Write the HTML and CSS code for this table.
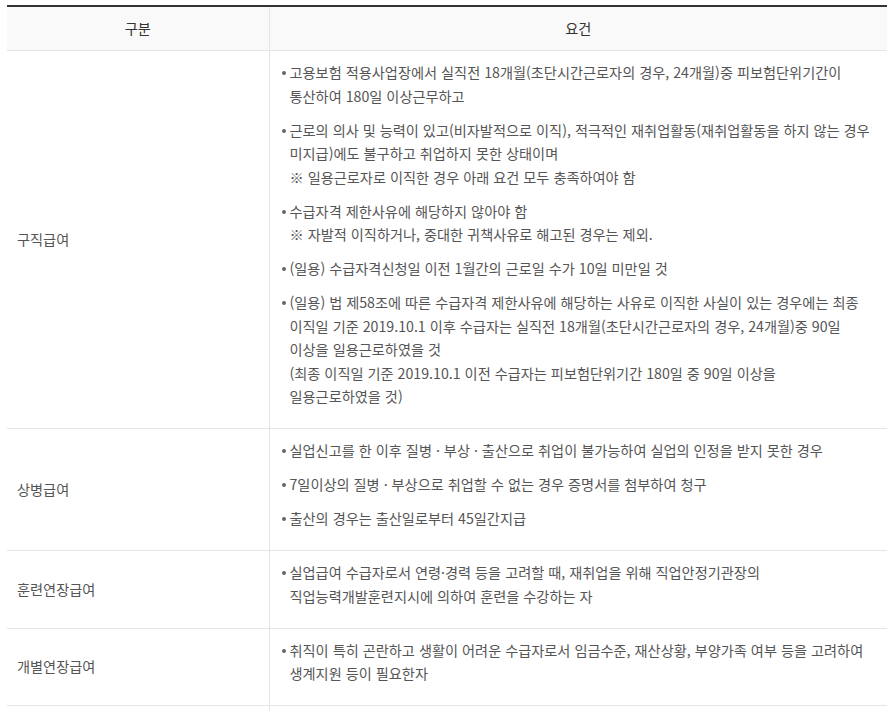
FILE: index.html
```html
<!DOCTYPE html>
<html lang="ko">
<head>
<meta charset="utf-8">
<title>구직급여 요건</title>
<link rel="stylesheet" href="styles.css">
</head>
<body>
<div class="wrap">
<table class="req-table">
  <colgroup>
    <col class="col-kind">
    <col class="col-req">
  </colgroup>
  <thead>
    <tr>
      <th>구분</th>
      <th>요건</th>
    </tr>
  </thead>
  <tbody>
    <tr>
      <td class="kind">구직급여</td>
      <td class="req">
        <ul class="bullets">
          <li>고용보험 적용사업장에서 실직전 18개월(초단시간근로자의 경우, 24개월)중 피보험단위기간이<br>통산하여 180일 이상근무하고</li>
          <li>근로의 의사 및 능력이 있고(비자발적으로 이직), 적극적인 재취업활동(재취업활동을 하지 않는 경우<br>미지급)에도 불구하고 취업하지 못한 상태이며<br>※ 일용근로자로 이직한 경우 아래 요건 모두 충족하여야 함</li>
          <li>수급자격 제한사유에 해당하지 않아야 함<br>※ 자발적 이직하거나, 중대한 귀책사유로 해고된 경우는 제외.</li>
          <li>(일용) 수급자격신청일 이전 1월간의 근로일 수가 10일 미만일 것</li>
          <li>(일용) 법 제58조에 따른 수급자격 제한사유에 해당하는 사유로 이직한 사실이 있는 경우에는 최종<br>이직일 기준 2019.10.1 이후 수급자는 실직전 18개월(초단시간근로자의 경우, 24개월)중 90일<br>이상을 일용근로하였을 것<br>(최종 이직일 기준 2019.10.1 이전 수급자는 피보험단위기간 180일 중 90일 이상을<br>일용근로하였을 것)</li>
        </ul>
      </td>
    </tr>
    <tr>
      <td class="kind">상병급여</td>
      <td class="req">
        <ul class="bullets">
          <li>실업신고를 한 이후 질병 · 부상 · 출산으로 취업이 불가능하여 실업의 인정을 받지 못한 경우</li>
          <li>7일이상의 질병 · 부상으로 취업할 수 없는 경우 증명서를 첨부하여 청구</li>
          <li>출산의 경우는 출산일로부터 45일간지급</li>
        </ul>
      </td>
    </tr>
    <tr>
      <td class="kind">훈련연장급여</td>
      <td class="req">
        <ul class="bullets">
          <li>실업급여 수급자로서 연령·경력 등을 고려할 때, 재취업을 위해 직업안정기관장의<br>직업능력개발훈련지시에 의하여 훈련을 수강하는 자</li>
        </ul>
      </td>
    </tr>
    <tr>
      <td class="kind">개별연장급여</td>
      <td class="req">
        <ul class="bullets">
          <li>취직이 특히 곤란하고 생활이 어려운 수급자로서 임금수준, 재산상황, 부양가족 여부 등을 고려하여<br>생계지원 등이 필요한자</li>
        </ul>
      </td>
    </tr>
    <tr class="next-row">
      <td class="kind"></td>
      <td class="req"></td>
    </tr>
  </tbody>
</table>
</div>
</body>
</html>
```

FILE: styles.css
```css
html, body {
  margin: 0;
  padding: 0;
  background: #ffffff;
}

body {
  font-family: "Noto Sans CJK KR", "Noto Sans", sans-serif;
  font-size: 14.2px;
  color: #555555;
}

.wrap {
  padding: 5px 6px 0 7px;
}

.req-table {
  width: 880px;
  border-collapse: collapse;
  border-top: 2px solid #333333;
  table-layout: fixed;
}

.col-kind {
  width: 262px;
}

.req-table th {
  background: #f9f9f9;
  color: #333333;
  font-weight: normal;
  height: 43px;
  padding: 0;
  line-height: 23.5px;
  text-align: center;
  vertical-align: middle;
  border-bottom: 1px solid #e5e5e5;
}

.req-table th + th,
.req-table td + td {
  border-left: 1px solid #e5e5e5;
}

.req-table td {
  border-bottom: 1px solid #e5e5e5;
}

.kind {
  padding: 0 10px;
  vertical-align: middle;
  line-height: 23.5px;
}

.req {
  padding: 10px 12px 9px 12px;
  vertical-align: top;
}

.next-row td {
  height: 40px;
}

.bullets {
  list-style: none;
  margin: 0;
  padding: 0;
}

.bullets li {
  position: relative;
  padding-left: 8px;
  line-height: 23.5px;
  margin-bottom: 10.5px;
  white-space: nowrap;
}

.bullets li::before {
  content: "";
  position: absolute;
  left: 0;
  top: 10px;
  width: 4px;
  height: 4px;
  border-radius: 50%;
  background: #666666;
}
```
